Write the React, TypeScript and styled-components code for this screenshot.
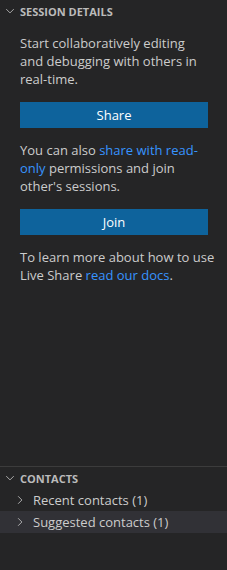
import styled, { createGlobalStyle } from 'styled-components'

const GlobalStyle = createGlobalStyle`
  html, body {
    margin: 0;
    padding: 0;
    background: #252526;
  }
  body {
    font-family: "Open Sans", "Noto Sans", sans-serif;
    -webkit-font-smoothing: antialiased;
  }
`

const Panel = styled.div`
  width: 227px;
  height: 570px;
  background: #252526;
  display: flex;
  flex-direction: column;
  overflow: hidden;
`

const Section = styled.div<{ grow?: boolean; divider?: boolean }>`
  display: flex;
  flex-direction: column;
  flex: ${p => (p.grow ? '1 1 auto' : '0 0 auto')};
  border-top: ${p => (p.divider ? '1px solid #3c3c3c' : 'none')};
`

const Header = styled.div`
  height: 22px;
  display: flex;
  align-items: center;
  padding-left: 4px;
  gap: 4px;
  color: #bbbbbb;
  font-size: 11px;
  font-weight: 700;
`

const Body = styled.div`
  padding: 12px 19px 0 20px;
  display: flex;
  flex-direction: column;
`

const Text = styled.p`
  margin: 0;
  color: #cccccc;
  font-size: 13px;
  line-height: 18px;
  white-space: nowrap;
`

const Link = styled.a`
  color: #3794ff;
  text-decoration: none;
  cursor: pointer;
`

const Button = styled.button`
  height: 26px;
  margin: 14px 0 13px;
  border: none;
  background: #0e639c;
  color: #ffffff;
  font-family: inherit;
  font-size: 13px;
  cursor: pointer;
`

const Row = styled.div<{ active?: boolean }>`
  height: 22px;
  display: flex;
  align-items: center;
  padding-left: 14px;
  gap: 7px;
  background: ${p => (p.active ? '#313136' : 'transparent')};
  color: #cccccc;
  font-size: 13px;
`

const Chevron = ({ down }: { down?: boolean }) => (
  <svg width="12" height="12" viewBox="0 0 16 16" fill="none" stroke="#c5c5c5" strokeWidth="1.1">
    {down ? <path d="M3 5.5l5 5 5-5" /> : <path d="M5.5 3l5 5-5 5" />}
  </svg>
)

export default function App() {
  return (
    <>
      <GlobalStyle />
      <Panel>
        <Section grow>
          <Header>
            <Chevron down />
            SESSION DETAILS
          </Header>
          <Body>
            <Text>
              Start collaboratively editing
              <br />
              and debugging with others in
              <br />
              real-time.
            </Text>
            <Button>Share</Button>
            <Text>
              You can also <Link>share with read-</Link>
              <br />
              <Link>only</Link> permissions and join
              <br />
              other's sessions.
            </Text>
            <Button>Join</Button>
            <Text>
              To learn more about how to use
              <br />
              Live Share <Link>read our docs</Link>.
            </Text>
          </Body>
        </Section>
        <Section divider style={{ marginBottom: 37 }}>
          <Header>
            <Chevron down />
            CONTACTS
          </Header>
          <Row>
            <Chevron />
            Recent contacts (1)
          </Row>
          <Row active>
            <Chevron />
            Suggested contacts (1)
          </Row>
        </Section>
      </Panel>
    </>
  )
}
